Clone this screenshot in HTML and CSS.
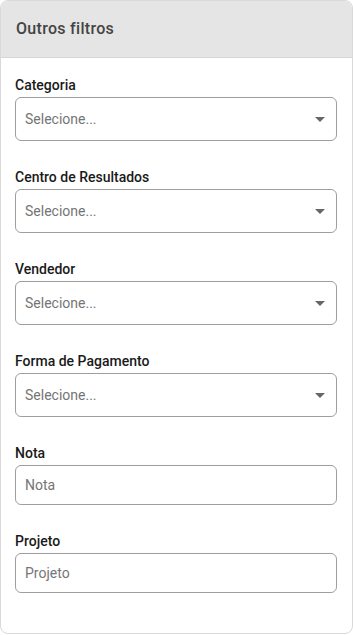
FILE: index.html
```html
<!DOCTYPE html>
<html lang="pt">
<head>
<meta charset="utf-8">
<link rel="stylesheet" href="styles.css">
</head>
<body>
<div class="card">
  <div class="card-header">Outros filtros</div>
  <div class="card-body">
    <div class="field">
      <label class="label">Categoria</label>
      <div class="select"><span class="ph">Selecione...</span><span class="caret"></span></div>
    </div>
    <div class="field">
      <label class="label">Centro de Resultados</label>
      <div class="select"><span class="ph">Selecione...</span><span class="caret"></span></div>
    </div>
    <div class="field">
      <label class="label">Vendedor</label>
      <div class="select"><span class="ph">Selecione...</span><span class="caret"></span></div>
    </div>
    <div class="field">
      <label class="label">Forma de Pagamento</label>
      <div class="select"><span class="ph">Selecione...</span><span class="caret"></span></div>
    </div>
    <div class="field">
      <label class="label">Nota</label>
      <input class="input" type="text" placeholder="Nota">
    </div>
    <div class="field">
      <label class="label">Projeto</label>
      <input class="input" type="text" placeholder="Projeto">
    </div>
  </div>
</div>
</body>
</html>
```
FILE: styles.css
```css
* { box-sizing: border-box; }
html, body { margin: 0; padding: 0; background: #fff; }
body { font-family: Roboto, "Liberation Sans", sans-serif; }
.card {
  width: 353px;
  height: 634px;
  border: 1px solid #d9d9d9;
  border-radius: 8px;
  overflow: hidden;
  background: #fff;
}
.card-header {
  height: 57px;
  background: #e5e5e5;
  border-bottom: 1px solid #d6d6d6;
  padding: 0 0 2px 15px;
  display: flex;
  align-items: center;
  font-size: 16px;
  font-weight: 500;
  color: #444;
  letter-spacing: 0.3px;
}
.card-body {
  padding: 19px 15px 0 14px;
  display: flex;
  flex-direction: column;
  gap: 28px;
}
.field { display: flex; flex-direction: column; }
.label {
  font-size: 14px;
  font-weight: 500;
  color: #1a1a1a;
  line-height: 16px;
  margin-bottom: 4px;
}
.select {
  height: 44px;
  border: 1px solid #9e9e9e;
  border-radius: 6px;
  display: flex;
  align-items: center;
  justify-content: space-between;
  padding: 0 10px 0 9px;
}
.ph { font-size: 14px; color: #757575; }
.caret {
  width: 0; height: 0;
  border-left: 5px solid transparent;
  border-right: 5px solid transparent;
  border-top: 5px solid #666;
  margin-right: 1px;
}
.input {
  height: 40px;
  border: 1px solid #9e9e9e;
  border-radius: 6px;
  padding: 0 9px;
  font-family: Roboto, "Liberation Sans", sans-serif;
  font-size: 14px;
  color: #333;
  outline: none;
}
.input::placeholder { color: #757575; }
```
